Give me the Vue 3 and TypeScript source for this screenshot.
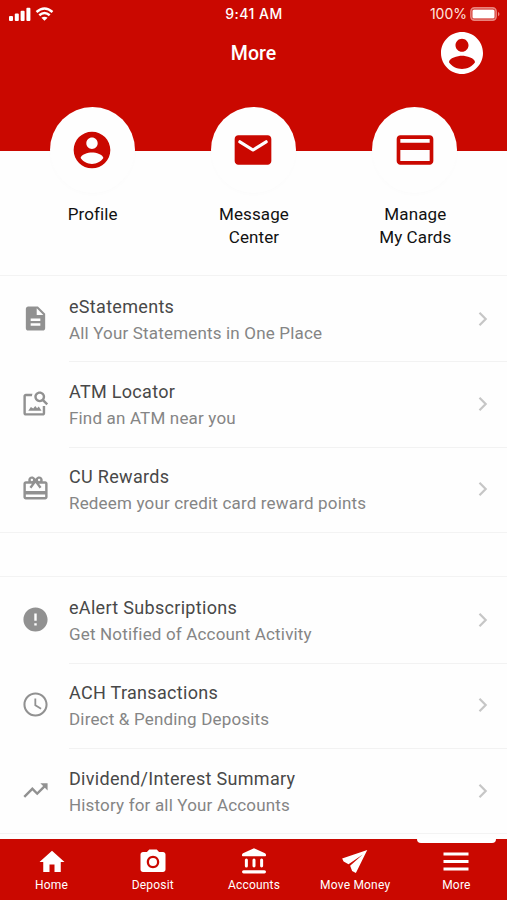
<script setup lang="ts">
interface Item {
  icon: string
  title: string
  subtitle: string
}

const account = 'M12 2C6.48 2 2 6.48 2 12s4.48 10 10 10 10-4.48 10-10S17.52 2 12 2zm0 3.200c1.700 0 3.100 1.400 3.100 3.100S13.700 11.400 12 11.400s-3.100-1.400-3.100-3.100S10.300 5.200 12 5.200zm0 14.400c-2.500 0-4.900-1.200-6.200-3.200 0-2 4.100-3.100 6.200-3.100s6.200 1.100 6.200 3.100c-1.300 2-3.700 3.200-6.200 3.200z'

const shortcuts = [
  {
    lines: ['Profile'],
    icon: account,
  },
  {
    lines: ['Message', 'Center'],
    icon: 'M20 4H4c-1.100 0-2 .9-2 2v12c0 1.100.9 2 2 2h16c1.100 0 2-.9 2-2V6c0-1.100-.9-2-2-2zm-.4 4.250l-7.070 4.420c-.32.200-.74.200-1.060 0L4.400 8.250a.85.85 0 1 1 .9-1.440L12 11l6.700-4.190a.85.85 0 1 1 .9 1.440z',
  },
  {
    lines: ['Manage', 'My Cards'],
    icon: 'M20 4H4c-1.110 0-1.990.89-1.990 2L2 18c0 1.110.89 2 2 2h16c1.110 0 2-.89 2-2V6c0-1.110-.89-2-2-2zm0 14H4v-6h16v6zm0-10H4V6h16v2z',
  },
]

const groups: Item[][] = [
  [
    {
      title: 'eStatements',
      subtitle: 'All Your Statements in One Place',
      icon: 'M14 2H6c-1.100 0-1.990.9-1.990 2L4 20c0 1.100.89 2 1.990 2H18c1.100 0 2-.9 2-2V8l-6-6zm2 16H8v-2h8v2zm0-4H8v-2h8v2zm-3-5V3.500L18.500 9H13z',
    },
    {
      title: 'ATM Locator',
      subtitle: 'Find an ATM near you',
      icon: 'M18 14v6H4V6h5.020c.05-.71.220-1.380.480-2H4c-1.100 0-2 .9-2 2v14c0 1.100.9 2 2 2h14c1.100 0 2-.9 2-2v-6zM17 18H6l2.200-3.200 1.900 1.400 1.700-2.200 1.500 2 1.400-1.500zm2.300-9.110c.44-.7.700-1.510.700-2.390C20 4.010 17.990 2 15.500 2S11 4.010 11 6.500s2.010 4.500 4.490 4.500c.88 0 1.700-.26 2.390-.7L21 13.420 22.420 12 19.300 8.890zM15.500 9C14.120 9 13 7.880 13 6.500S14.120 4 15.500 4 18 5.120 18 6.500 16.880 9 15.500 9z',
    },
    {
      title: 'CU Rewards',
      subtitle: 'Redeem your credit card reward points',
      icon: 'M20 6h-2.180c.11-.31.180-.65.180-1 0-1.660-1.340-3-3-3-1.050 0-1.960.54-2.500 1.350l-.5.670-.5-.68C10.960 2.540 10.050 2 9 2 7.340 2 6 3.340 6 5c0 .35.070.69.180 1H4c-1.110 0-1.990.89-1.990 2L2 19c0 1.110.89 2 2 2h16c1.110 0 2-.89 2-2V8c0-1.110-.89-2-2-2zm-5-2c.55 0 1 .45 1 1s-.45 1-1 1-1-.45-1-1 .45-1 1-1zM9 4c.55 0 1 .45 1 1s-.45 1-1 1-1-.45-1-1 .45-1 1-1zm11 15H4v-2h16v2zm0-5H4V8h5.080L7 10.830 8.620 12 11 8.760l1-1.360 1 1.360L15.380 12 17 10.830 14.920 8H20v6z',
    },
  ],
  [
    {
      title: 'eAlert Subscriptions',
      subtitle: 'Get Notified of Account Activity',
      icon: 'M12 2C6.480 2 2 6.480 2 12s4.480 10 10 10 10-4.480 10-10S17.520 2 12 2zm1 15h-2v-2h2v2zm0-4h-2V7h2v6z',
    },
    {
      title: 'ACH Transactions',
      subtitle: 'Direct & Pending Deposits',
      icon: 'M11.990 2C6.470 2 2 6.480 2 12s4.470 10 9.990 10C17.520 22 22 17.520 22 12S17.520 2 11.990 2zM12 20.300c-4.580 0-8.300-3.720-8.300-8.300S7.420 3.700 12 3.700s8.300 3.720 8.300 8.300-3.720 8.300-8.300 8.300zm.6-13.300h-1.500v6l5.150 3.090.75-1.230-4.400-2.610z',
    },
    {
      title: 'Dividend/Interest Summary',
      subtitle: 'History for all Your Accounts',
      icon: 'M16 6l2.290 2.290-4.880 4.880-4-4L2 16.590 3.410 18l6-6 4 4 6.300-6.290L22 12V6z',
    },
  ],
]

const tabs = [
  { label: 'Home', icon: 'M10 20v-6h4v6h5v-8h3L12 3 2 12h3v8z' },
  {
    label: 'Deposit',
    icon: 'M9 2L7.170 4H4c-1.100 0-2 .9-2 2v12c0 1.100.9 2 2 2h16c1.100 0 2-.9 2-2V6c0-1.100-.9-2-2-2h-3.170L15 2H9zm3 15c-2.760 0-5-2.240-5-5s2.240-5 5-5 5 2.240 5 5-2.240 5-5 5zm0-8.200a3.200 3.200 0 1 0 0 6.400 3.200 3.200 0 1 0 0-6.400z',
  },
  {
    label: 'Accounts',
    icon: 'M12 1l8.800 3.900q.8.400.8 1.200v.6q0 .6-.6.6H3q-.6 0-.6-.6v-.6q0-.8.8-1.200zM4.700 10.400a1.200 1.200 0 0 1 2.400 0v4.800a1.200 1.200 0 0 1-2.400 0zM10.800 10.400a1.200 1.200 0 0 1 2.400 0v4.800a1.200 1.200 0 0 1-2.400 0zM16.900 10.400a1.200 1.200 0 0 1 2.400 0v4.800a1.200 1.200 0 0 1-2.400 0zM3.700 18.500h16.600a1.300 1.300 0 0 1 0 2.600H3.700a1.300 1.300 0 0 1 0-2.600z',
  },
  { label: 'Move Money', icon: 'M21.800 2.400L1.700 9.200l1.200 2.300 3.900 2.200L18.200 6 8.100 14.900l1.600 4.300 3 1.600z' },
  { label: 'More', icon: 'M2 4.400h20v2.300H2zM2 10.400h20v2.300H2zM2 16.400h20v2.300H2z' },
]
</script>

<template>
  <div class="screen">
    <header class="header">
      <div class="status">
        <div class="signals">
          <svg class="bars" viewBox="0 0 22 14">
            <rect x="0" y="9" width="4" height="5" rx="1" />
            <rect x="5.800" y="6.500" width="4" height="7.500" rx="1" />
            <rect x="11.600" y="3.700" width="4" height="10.300" rx="1" />
            <rect x="17.400" y="0.700" width="4" height="13.300" rx="1" />
          </svg>
          <svg class="wifi" viewBox="0 0 18 14">
            <path d="M1 5q8-7 16 0M3.800 8.300q5.200-4.500 10.400 0" />
            <path class="solid" d="M5.900 10.800q3.100-2.300 6.200 0L9 13.800z" />
          </svg>
        </div>
        <span class="time">9:41 AM</span>
        <div class="power">
          <span>100%</span>
          <svg class="battery" viewBox="0 0 30 14">
            <rect class="shell" x=".9" y=".9" width="25.200" height="12.200" rx="3.500" />
            <rect x="2.400" y="2.400" width="22.200" height="9.200" rx="1.500" />
            <path class="tip" d="M28 4.700q3 2.300 0 4.600z" />
          </svg>
        </div>
      </div>
      <div class="titlebar">
        <h1>More</h1>
        <svg class="avatar" viewBox="2 2 20 20"><path :d="account" /></svg>
      </div>
    </header>

    <section class="shortcuts">
      <div v-for="s in shortcuts" :key="s.lines[0]" class="shortcut">
        <div class="disc">
          <svg viewBox="0 0 24 24"><path :d="s.icon" /></svg>
        </div>
        <div class="caption">
          <div v-for="line in s.lines" :key="line">{{ line }}</div>
        </div>
      </div>
    </section>

    <main class="lists">
      <section v-for="(group, i) in groups" :key="i" class="group">
        <div v-for="item in group" :key="item.title" class="row">
          <svg class="row-icon" viewBox="0 0 24 24"><path :d="item.icon" /></svg>
          <div class="row-body">
            <div>
              <div class="row-title">{{ item.title }}</div>
              <div class="row-sub">{{ item.subtitle }}</div>
            </div>
            <svg class="chevron" viewBox="0 0 10 16"><path d="M1.500 1.700l6.200 6.300-6.200 6.300" /></svg>
          </div>
        </div>
      </section>
    </main>

    <nav class="tabs">
      <div v-for="tab in tabs" :key="tab.label" class="tab" :class="{ active: tab.label === 'More' }">
        <svg viewBox="0 0 24 24"><path :d="tab.icon" /></svg>
        <span>{{ tab.label }}</span>
      </div>
    </nav>
  </div>
</template>

<style>
body {
  background: #fefefe;
}
</style>

<style scoped>
* {
  box-sizing: border-box;
}
.screen {
  width: 507px;
  height: 900px;
  display: flex;
  flex-direction: column;
  overflow: hidden;
  font-family: Roboto, sans-serif;
  background: #fefefe;
}
svg {
  display: block;
  fill: currentColor;
  flex: none;
}
.header {
  flex: none;
  height: 151px;
  background: #ca0800;
  color: #fff;
}
.status {
  height: 27px;
  padding: 0 7px 0 9px;
  display: grid;
  grid-template-columns: 1fr auto 1fr;
  align-items: center;
  font-family: Inter, sans-serif;
  font-size: 14px;
}
.signals {
  display: flex;
  align-items: center;
  gap: 4px;
}
.bars {
  width: 22px;
  height: 14px;
}
.wifi {
  width: 19px;
  height: 14px;
}
.wifi path {
  fill: none;
  stroke: #fff;
  stroke-width: 2.500;
}
.wifi .solid {
  fill: #fff;
  stroke: none;
}
.time {
  font-weight: 500;
  letter-spacing: 0.500px;
  margin-right: 1px;
}
.power {
  display: flex;
  justify-content: flex-end;
  align-items: center;
  gap: 3px;
  color: #ffe5df;
}
.battery {
  width: 30px;
  height: 14px;
  color: #fff;
}
.battery .shell {
  fill: none;
  stroke: #e9847d;
  stroke-width: 1.600;
}
.battery .tip {
  fill: #e9847d;
}
.titlebar {
  height: 51px;
  padding: 0 24px 0 66px;
  display: flex;
  align-items: center;
}
h1 {
  flex: 1;
  margin: 1px 0 0;
  text-align: center;
  font-size: 19.500px;
  font-weight: 500;
}
.avatar {
  width: 42px;
  height: 42px;
}
.shortcuts {
  flex: none;
  height: 168px;
  margin-top: -44px;
  padding: 0 11.500px;
  display: grid;
  grid-template-columns: repeat(3, 1fr);
}
.shortcut {
  display: flex;
  flex-direction: column;
  align-items: center;
}
.disc {
  width: 85px;
  height: 86px;
  border-radius: 50%;
  background: #fefefe;
  box-shadow: 0 2px 4px rgba(0, 0, 0, 0.012);
  color: #ca0800;
  display: flex;
  align-items: center;
  justify-content: center;
}
.disc svg {
  width: 44px;
  height: 44px;
}
.caption {
  margin-top: 10px;
  padding-left: 1px;
  text-align: center;
  font-size: 17px;
  line-height: 23px;
  letter-spacing: 0.100px;
  color: #111;
}
.group {
  border-top: 1px solid #f3f3f3;
  border-bottom: 1px solid #f3f3f3;
}
.group + .group {
  margin-top: 43px;
}
.row {
  height: 85.400px;
  display: flex;
  align-items: center;
}
.row-icon {
  width: 29px;
  height: 29px;
  margin: 0 19.500px 1px 20.500px;
  color: #919191;
}
.row-body {
  flex: 1;
  height: 100%;
  padding: 2px 19px 0 0;
  display: flex;
  align-items: center;
  justify-content: space-between;
}
.row + .row .row-body {
  padding-top: 1px;
  border-top: 1px solid #f2f2f2;
}
.row-title,
.row-sub {
  line-height: 26px;
  white-space: nowrap;
}
.row-title {
  font-size: 18px;
  letter-spacing: 0.310px;
  color: #484848;
}
.row-sub {
  font-size: 17px;
  letter-spacing: 0.170px;
  color: #858585;
}
.chevron {
  width: 10px;
  height: 16px;
  margin-bottom: 2px;
}
.chevron path {
  fill: none;
  stroke: #c6c6c6;
  stroke-width: 2.200;
}
.tabs {
  flex: none;
  height: 61.500px;
  margin-top: auto;
  padding-left: 1px;
  background: #ca0800;
  color: #fff;
  display: grid;
  grid-template-columns: repeat(5, 1fr);
}
.tab {
  position: relative;
  display: flex;
  flex-direction: column;
  align-items: center;
  padding-top: 8px;
  font-size: 12px;
  line-height: 16px;
  letter-spacing: 0.200px;
}
.tab svg {
  width: 30px;
  height: 30px;
}
.tab.active::before {
  content: '';
  position: absolute;
  top: -1px;
  left: 50%;
  width: 79px;
  height: 5px;
  margin-left: -39.500px;
  border-radius: 0 0 4px 4px;
  background: #fff;
}
</style>
